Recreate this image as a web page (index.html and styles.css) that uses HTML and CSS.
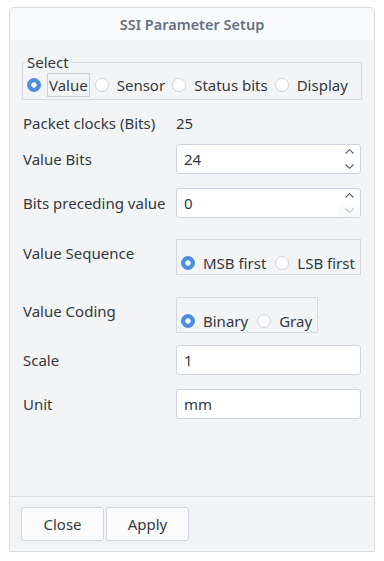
FILE: index.html
```html
<!DOCTYPE html>
<html lang="en">
<head>
  <meta charset="UTF-8" />
  <meta name="viewport" content="width=device-width, initial-scale=1.0"/>
  <title>SSI Parameter Setup</title>
  <link rel="stylesheet" href="styles.css">
</head>
<body>
  <div class="dialog">
    <div class="titlebar">SSI Parameter Setup</div>

    <div class="content">
      <fieldset class="select-box">
        <legend>Select</legend>
        <div class="radio-row">
          <label class="radio"><input type="radio" name="sel" checked><span class="focus">Value</span></label>
          <label class="radio"><input type="radio" name="sel"><span>Sensor</span></label>
          <label class="radio"><input type="radio" name="sel"><span>Status bits</span></label>
          <label class="radio"><input type="radio" name="sel"><span>Display</span></label>
        </div>
      </fieldset>

      <div class="row row-packet">
        <span>Packet clocks (Bits)</span>
        <span class="value">25</span>
      </div>

      <div class="row row-spin">
        <label for="valueBits">Value Bits</label>
        <div class="spin">
          <input type="text" id="valueBits" value="24">
          <div class="spin-buttons">
            <span><svg width="9" height="5" viewBox="0 0 9 5"><path d="M0.5 4.5 L4.5 0.7 L8.5 4.5" fill="none" stroke="#555a60" stroke-width="1.1"/></svg></span>
            <span><svg width="9" height="5" viewBox="0 0 9 5"><path d="M0.5 0.5 L4.5 4.3 L8.5 0.5" fill="none" stroke="#555a60" stroke-width="1.1"/></svg></span>
          </div>
        </div>
      </div>

      <div class="row row-spin row-preceding">
        <label for="precBits">Bits preceding value</label>
        <div class="spin">
          <input type="text" id="precBits" value="0">
          <div class="spin-buttons">
            <span><svg width="9" height="5" viewBox="0 0 9 5"><path d="M0.5 4.5 L4.5 0.7 L8.5 4.5" fill="none" stroke="#555a60" stroke-width="1.1"/></svg></span>
            <span class="disabled"><svg width="9" height="5" viewBox="0 0 9 5"><path d="M0.5 0.5 L4.5 4.3 L8.5 0.5" fill="none" stroke="#b9bdc2" stroke-width="1.1"/></svg></span>
          </div>
        </div>
      </div>

      <div class="row row-group row-sequence">
        <span class="group-label">Value Sequence</span>
        <div class="choice">
          <label class="radio"><input type="radio" name="seq" checked><span>MSB first</span></label>
          <label class="radio"><input type="radio" name="seq"><span>LSB first</span></label>
        </div>
      </div>

      <div class="row row-group row-coding">
        <span class="group-label">Value Coding</span>
        <div class="choice">
          <label class="radio"><input type="radio" name="coding" checked><span>Binary</span></label>
          <label class="radio"><input type="radio" name="coding"><span>Gray</span></label>
        </div>
      </div>

      <div class="row row-field row-scale">
        <label for="scale">Scale</label>
        <input class="field" type="text" id="scale" value="1">
      </div>

      <div class="row row-field row-unit">
        <label for="unit">Unit</label>
        <input class="field" type="text" id="unit" value="mm">
      </div>
    </div>

    <div class="footer">
      <button>Close</button>
      <button>Apply</button>
    </div>
  </div>
</body>
</html>
```

FILE: styles.css
```css
body {
  margin: 0;
  background: #fff;
  font-family: "Noto Sans", sans-serif;
  font-size: 15px;
  color: #34393e;
}

.dialog {
  margin: 7px 0 0 9px;
  width: 366px;
  height: 545px;
  box-sizing: border-box;
  border: 1px solid #d9dce0;
  border-radius: 5px 5px 0 0;
  background: #f3f4f6;
  display: flex;
  flex-direction: column;
}

.titlebar {
  height: 32px;
  line-height: 32px;
  text-align: center;
  background: #f9fafb;
  border-radius: 5px 5px 0 0;
  font-size: 14.5px;
  font-weight: 600;
  color: #667082;
}

.content {
  flex: 1;
  padding: 13px 12px 0;
  display: flex;
  flex-direction: column;
}

/* select group */
.select-box {
  margin: 0;
  min-width: 0;
  padding: 2px 4px 2px;
  border: 1px solid #d5d9de;
}

.select-box legend {
  padding: 0 2px;
  margin-left: -2px;
  line-height: 18px;
}

.radio-row {
  display: flex;
  align-items: center;
  gap: 5px;
  height: 24px;
}

.radio {
  display: flex;
  align-items: center;
  gap: 6px;
  height: 24px;
}

.radio span {
  display: flex;
  align-items: center;
  height: 22px;
  padding: 0 1px;
  border: 1px solid transparent;
}

.radio span.focus {
  border-color: #cbcfd5;
}

.radio input {
  appearance: none;
  margin: 0;
  width: 14px;
  height: 14px;
  border-radius: 50%;
  border: 1px solid #cfd4dc;
  background: #fff;
  flex: none;
}

.radio input:checked {
  border-color: #4a8de0;
  background: radial-gradient(circle, #fff 0 2.4px, #4a8fe2 3px);
}

/* form rows */
.row {
  display: grid;
  grid-template-columns: 153px minmax(0, 1fr);
  padding: 0 1px;
  align-items: center;
}

.row-packet {
  height: 24px;
  margin-top: 11px;
}

.row-spin {
  margin-top: 9px;
}

.row-preceding {
  margin-top: 14px;
}

.spin {
  height: 30px;
  box-sizing: border-box;
  border: 1px solid #cbd3e0;
  border-radius: 3px;
  background: #fff;
  display: flex;
  min-width: 0;
}

.spin input,
.field {
  font: inherit;
  color: inherit;
  background: transparent;
  border: none;
  outline: none;
  min-width: 0;
}

.spin input {
  flex: 1;
  width: 0;
  padding: 0 0 0 7px;
}

.spin-buttons {
  width: 22px;
  display: flex;
  flex-direction: column;
}

.spin-buttons span {
  flex: 1;
  display: flex;
  align-items: center;
  justify-content: center;
}

.spin-buttons span:first-child {
  padding-bottom: 2px;
}

.spin-buttons span:last-child {
  padding-top: 1px;
}

.spin-buttons .disabled {
  background: #fafbfb;
}

.row-group {
  align-items: start;
  margin-top: 21px;
}

.row-coding {
  margin-top: 22px;
}

.group-label {
  line-height: 20px;
  padding-top: 4px;
}

.choice {
  justify-self: start;
  height: 36px;
  box-sizing: border-box;
  border: 1px solid #d5d9de;
  padding: 12px 3px 0 4px;
  display: flex;
  align-items: center;
  gap: 7px;
}

.choice .radio {
  height: 22px;
}

.row-scale {
  margin-top: 12px;
}

.row-unit {
  margin-top: 14px;
}

.field {
  height: 30px;
  box-sizing: border-box;
  border: 1px solid #cbd3e0;
  border-radius: 3px;
  background: #fff;
  padding: 0 7px;
  width: 100%;
}

.footer {
  border-top: 1px solid #dcdfe3;
  padding: 10px 11px;
  display: flex;
  gap: 2px;
}

.footer button {
  width: 83px;
  height: 34px;
  font: inherit;
  color: inherit;
  background: #fcfcfd;
  border: 1px solid #cfd6e1;
  border-radius: 3px;
}
```
